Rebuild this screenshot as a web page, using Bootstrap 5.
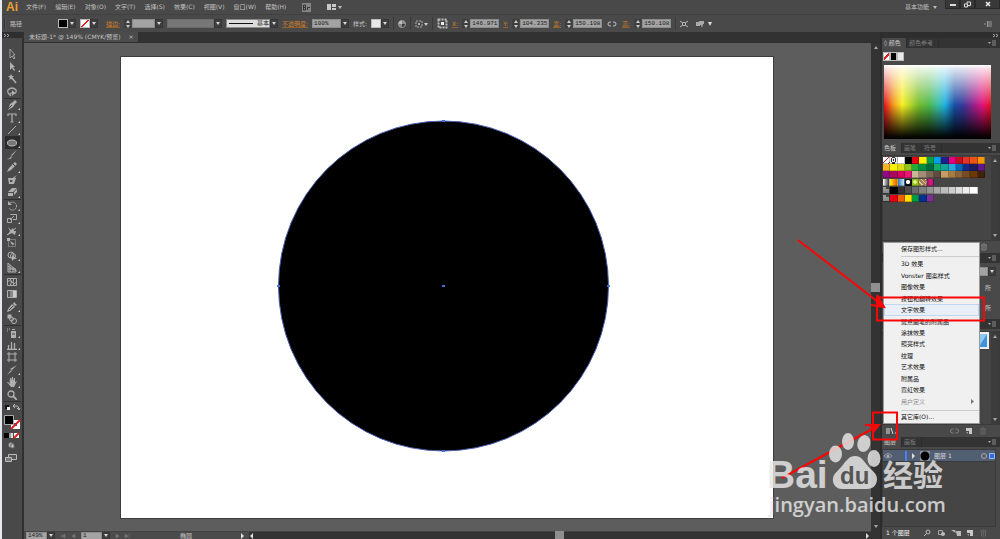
<!DOCTYPE html>
<html lang="zh-CN">
<head>
<meta charset="utf-8">
<meta name="viewport" content="width=device-width, initial-scale=1">
<title>未标题-1</title>
<link href="https://cdn.jsdelivr.net/npm/bootstrap@5.3.0/dist/css/bootstrap.min.css" rel="stylesheet">
<style>
:root{--bar:#494949;--dark:#323232;--line:#393939;--ink:#c4c4c4;--orange:#d2802c}
body{font:6px/8px "DejaVu Sans","Noto Sans CJK SC",sans-serif;color:var(--ink);background:var(--bar);border-left:2px solid #e4e9f2}
button,input,select{font:inherit;color:inherit;border:0;border-radius:0;padding:0;background:none;min-width:0}
a{color:inherit;text-decoration:none}
svg{display:block;flex:none}
.menubar{height:15px;border-bottom:1px solid #414141}
.logo{font:bold 12px/14px "Liberation Sans",sans-serif;color:#eda12f;padding:0 8px 0 4px}
.menubar nav{gap:9px}
.winbtns button{height:9px;width:15px;background:#383838;border:1px solid #2a2a2a;border-top:0;color:#ddd}
.winbtns button:last-child{width:25px}
.control{height:17px;padding-left:2px}
.ctl{margin-left:4px}
.ctl-wide{margin-left:8px}
.ctl-far{margin-left:36px}
.grip{width:2px;height:11px;background:#333;border-right:1px solid #555}
.chip{width:10px;height:9px;border:1px solid #bbb}
.chip-sm{width:7px}
.chip-white{background:#e9e9e9}.chip-black{background:#000}
.chip-none{background:linear-gradient(135deg,#fff 41%,#e02020 41%,#e02020 59%,#fff 59%)}
.drop{width:8px;height:9px;background:#3e3e3e;border:1px solid #353535;display:flex;align-items:center;justify-content:center}
.drop::after{content:"";border:2px solid transparent;border-top:3px solid #d5d5d5;border-bottom:0}
.field{background:#a3a3a3;color:#1b1b1b;height:9px;border:1px solid #8b8b8b;font:6px/7px "Liberation Mono","Noto Sans CJK SC",monospace;padding-left:1px;appearance:none}
.w-num{width:29px}.w-weight{width:23px}.w-brush{width:47px}.w-small{width:21px}.w-profile{width:44px;background:#dcdcdc}
.field:disabled{background:#777;border-color:#6c6c6c;opacity:1}
.lab{color:var(--orange);border-bottom:1px solid #96602c;line-height:7px}
.spin{width:7px;display:flex;flex-direction:column;align-items:center;gap:2px;margin-right:1px;height:9px;background:#3f3f3f;justify-content:center}
.spin::before,.spin::after{content:"";border:2px solid transparent}
.spin::before{border-bottom:3px solid #ccc;border-top:0}.spin::after{border-top:3px solid #ccc;border-bottom:0}
.rule{width:1px;height:13px;background:#3b3b3b}
.minh-0{min-height:0}.minw-0{min-width:0}
.tools{width:22px;background:var(--bar);border-right:2px solid #303030}
.dockcap{height:6px;background:#2e2e2e;color:#aaa}
.toollist{height:354px;margin-top:10px}
.toollist button{flex:1 1 0;width:15px;display:flex;align-items:center;justify-content:center;position:relative;color:#b0b0b0}
.toollist button.flyout::after{content:"";position:absolute;right:0;bottom:1px;border:1px solid transparent;border-right-color:#ccc;border-bottom-color:#ccc}
.toollist button.active{background:#2c2c2c}
.toollist hr{margin:0;width:17px;border-color:#303030;opacity:1;flex:none}
.tabstrip{height:11px;background:#323232;border-bottom:1px solid #2f2f2f}
.doctab{background:#4b4b4b;padding:0 4px 0 5px;gap:8px;line-height:10px;height:10px}
.canvas{background:#5d5d5d;padding:14px 98px 13px 97px}
.artboard{background:#fff;box-shadow:0 0 0 1px #3d3d3d}
.vscroll{width:9px;background:#333;padding:3px 0}
.thumb{width:9px;height:9px;background:#8f8f8f}
.status{height:8px;background:#4b4b4b;border-top:1px solid #444;padding-left:2px}
.status .field,.status .drop{height:8px}
.hscroll{background:#333}
.dock{width:120px;background:var(--bar);border-left:2px solid #2c2c2c}
.ptabs{height:10px;background:#333;line-height:10px}
.ptabs button{padding:0 5px 0 2px;color:#7e7e7e;border-right:1px solid #2c2c2c}
.ptabs button.active{background:var(--bar);color:#ccc}
.p-color{height:105px}.p-swatch{height:110px}.p-look{height:66px}.p-style{height:118px}
.inset{background:#454545;border:1px solid #3a3a3a;margin-top:2px}
.chiprow{margin:4px 0 0 1px}
.spectrum{height:74px;margin:4px 9px 0 2px;background:linear-gradient(#fff 0,rgba(255,255,255,.85) 5%,rgba(255,255,255,.05) 52%,rgba(0,0,0,0) 54%,rgba(0,0,0,.93) 95%,#000),linear-gradient(90deg,#e60f1d 0,#f39a1c 9%,#f8ee22 17%,#78bd2b 32%,#4fb84a 42%,#39bda0 50%,#1eb0e0 57%,#174da2 66%,#38389a 74%,#97208b 84%,#e3137c 92%,#e60f1d)}
.swrow{display:grid;grid-template-columns:repeat(14,1fr);width:102px;height:7px}
.swrow i{border:1px solid rgba(0,0,0,.25);border-width:0 1px 1px 0}
.swrow.grouped{margin-top:1px}
#swatches{padding-top:1px}
.pscroll{width:8px;background:#3c3c3c;padding:3px 0}
.up,.down{border:2px solid transparent;align-self:center}
.up{border-bottom:3px solid #a8a8a8;border-top:0}.down{border-top:3px solid #a8a8a8;border-bottom:0}
.pfoot{height:12px;color:#858585;padding-right:12px}
.lookrow{margin-top:8px;padding-right:9px}
.layer{height:12px;background:#525e72;color:#ddd;border-bottom:1px solid #3a3a3a}
.layer .tagline{width:2px;height:10px;background:#4a80ff}
.popup{position:absolute;left:1px;top:210px;width:97px;height:182px;background:#f0f0f0;border:1px solid #979797;z-index:2;color:#111}
.popup a{flex:1 1 0;padding-left:17px;display:flex;align-items:center;line-height:8px}
.popup a.hot{background:#e9eff7;box-shadow:inset 0 0 0 1px #c3d8f0}
.popup a.off{color:#888}
.popup hr{margin:2px 0 1px 17px;border-color:#ccc;opacity:1;flex:none}
.notes{position:absolute;right:0;top:0;z-index:3;pointer-events:none}
</style>
</head>
<body class="vh-100 overflow-hidden d-flex flex-column">
<svg class="d-none">
  <symbol id="pm" viewBox="0 0 8 6"><path d="M0 2h3L1.500 4z" fill="#aaa"/><path d="M4 1h4M4 3h4M4 5h4" stroke="#888"/></symbol>
  <symbol id="trash" viewBox="0 0 8 8"><path d="M1 2h6M3 1h2M2 2v5h4V2M4 3v3" fill="none" stroke="currentColor"/></symbol>
  <symbol id="newpage" viewBox="0 0 8 8"><path d="M1 1h6v6H4V4H1z" fill="#c8c8c8"/><path d="M1 5h2v2z" fill="#999"/></symbol>
  <symbol id="link" viewBox="0 0 10 8"><path d="M4 2H3a2 2 0 000 4h1M6 2h1a2 2 0 010 4H6" fill="none" stroke="currentColor"/></symbol>
</svg>

<header class="menubar d-flex align-items-center flex-shrink-0">
  <span class="logo">Ai</span>
  <nav class="d-flex" aria-label="主菜单">
    <a href="#">文件(F)</a><a href="#">编辑(E)</a><a href="#">对象(O)</a><a href="#">文字(T)</a><a href="#">选择(S)</a><a href="#">效果(C)</a><a href="#">视图(V)</a><a href="#">窗口(W)</a><a href="#">帮助(H)</a>
  </nav>
  <button class="ms-3" aria-label="Bridge"><svg width="9" height="9" viewBox="0 0 9 9"><path d="M0 0h9v9H0z" fill="#858585"/><path d="M1.500 2v5h2V4.500h-2M1.500 2h2v2.500M5.500 7V4.500H8" fill="none" stroke="#333"/></svg></button>
  <button class="ms-2 ps-2" aria-label="排列文档"><svg width="15" height="8" viewBox="0 0 15 8"><path d="M0 1h4v6H0zM5 1h4v3H5zM5 5h4v2H5z" fill="#c8c8c8"/><path d="M11 3h4l-2 3z" fill="#bbb"/></svg></button>
  <button class="ms-auto me-2 d-flex align-items-center gap-1">基本功能<svg width="4" height="4"><path d="M0 1h4L2 4z" fill="#bbb"/></svg></button>
  <div class="winbtns d-flex align-self-start">
    <button aria-label="最小化"><svg class="mx-auto" width="6" height="6"><path d="M0 4h6" stroke="#ddd" stroke-width="2"/></svg></button>
    <button aria-label="还原"><svg class="mx-auto" width="7" height="7"><path d="M.5 3h3v3h-3zM3 3V1h3.500v3.500H4" fill="none" stroke="#ddd"/></svg></button>
    <button aria-label="关闭"><svg class="mx-auto" width="6" height="6"><path d="M1 1l4 4M5 1L1 5" stroke="#eee" stroke-width="1.500"/></svg></button>
  </div>
</header>

<div class="control d-flex align-items-center flex-shrink-0">
  <span class="grip"></span><span class="ctl">路径</span>
  <button class="d-flex align-items-center ctl-far" aria-label="填色"><span class="chip chip-black"></span><span class="drop"></span></button>
  <button class="d-flex align-items-center ctl" aria-label="描边颜色"><span class="chip chip-none"></span><span class="drop"></span></button>
  <label class="lab ctl-wide" for="sw">描边:</label>
  <span class="spin ctl"></span><input id="sw" class="field w-weight"><button class="drop" aria-label="粗细"></button>
  <input class="field w-brush ctl" disabled aria-label="画笔"><span class="drop"></span>
  <button class="field w-profile ctl d-flex align-items-center justify-content-between" aria-label="基本"><svg width="26" height="3"><path d="M1 1.500h24" stroke="#111"/></svg><span>基本</span></button><button class="drop" aria-label="描边样式"></button>
  <label class="lab ctl" for="op">不透明度:</label>
  <input id="op" class="field w-num ctl" value="100%"><button class="drop" aria-label="不透明度列表"></button>
  <span class="ctl">样式:</span>
  <button class="d-flex align-items-center ctl" aria-label="样式"><span class="chip chip-white"></span><span class="drop"></span></button>
  <span class="rule ctl"></span>
  <button class="ctl" aria-label="重新着色"><svg width="8" height="8"><circle cx="4" cy="4" r="3.500" fill="#888"/><path d="M4 .5A3.500 3.500 0 00.5 4L4 4z" fill="#bbb"/><path d="M7.500 4A3.500 3.500 0 014 7.500L4 4z" fill="#3a3a3a"/><circle cx="4" cy="4" r="3.500" fill="none" stroke="#aaa" stroke-width=".8"/></svg></button>
  <span class="rule ctl"></span>
  <button class="ctl" aria-label="选择类似"><svg width="13" height="8"><path d="M1 1h6v6H1z" fill="none" stroke="#aaa" stroke-dasharray="2 1"/><path d="M3 3h2v2H3z" fill="#aaa"/><path d="M9 3h4l-2 3z" fill="#ccc"/></svg></button>
  <span class="rule ctl"></span>
  <button class="ctl" aria-label="参考点"><svg width="11" height="11"><path d="M1.500 1.500h8v8h-8z" fill="none" stroke="#bbb" stroke-width="2" stroke-dasharray="2 1"/><path d="M4 4h3v3H4z" fill="#eee"/></svg></button>
  <label class="lab ctl" for="px">X:</label><span class="spin ctl"></span><input id="px" class="field w-num" value="146.971 mm">
  <label class="lab ctl" for="py">Y:</label><span class="spin ctl"></span><input id="py" class="field w-num" value="104.335 mm">
  <label class="lab ctl" for="pw">宽:</label><span class="spin ctl"></span><input id="pw" class="field w-num" value="150.108 mm">
  <button class="ctl" aria-label="约束比例"><svg width="12" height="8"><use href="#link"/></svg></button>
  <label class="lab ctl" for="ph">高:</label><span class="spin ctl"></span><input id="ph" class="field w-num" value="150.108 mm">
  <span class="rule ctl"></span>
  <button class="ctl" aria-label="隔离"><svg width="8" height="8"><path d="M0 1l2 1.500M8 1L6 2.500M0 7l2-1.500M8 7L6 5.500M2.500 2.500h3v3h-3z" fill="none" stroke="#bbb"/></svg></button>
  <button class="ctl-wide" aria-label="编辑"><svg width="16" height="8"><path d="M0 2h4v4H0zM3 1h5v3H7L6 8 5 5H3z" fill="#aaa"/><path d="M12 2h4l-2 4z" fill="#ddd"/></svg></button>
  <button class="ms-auto me-2" aria-label="控制菜单"><svg width="8" height="6"><path d="M0 3h2M4 1h4M4 3h4M4 5h4M3.500 0v6" stroke="#999" fill="none"/></svg></button>
</div>

<main class="d-flex flex-grow-1 minh-0">
  <aside class="tools d-flex flex-column align-items-center flex-shrink-0">
    <div class="dockcap w-100"><svg width="8" height="6"><path d="M2 2l2 1.500-2 1.500M5 2l2 1.500-2 1.500" fill="none" stroke="#aaa"/></svg></div>
    <div id="tools" class="toollist d-flex flex-column align-items-center flex-shrink-0"></div>
    <svg width="18" height="62" viewBox="0 0 18 62">
      <path d="M2 3h4v4H2z" fill="#111"/><path d="M4 5h3v3H4z" fill="#eee"/><path d="M11 4h3q2 0 2 4M12 2l-2 2 2 2M14 6l2 2 1-2" fill="none" stroke="#bbb"/>
      <path d="M8 18h9v9H8z" fill="#fff"/><path d="M11 21h3v3h-3z" fill="#555"/><path d="M8 27l9-9" stroke="#e02020" stroke-width="2"/><path d="M1.500 13.500h9v9h-9z" fill="#000" stroke="#aaa"/>
      <path d="M1 31h5v5H1z" fill="#000"/><path d="M6 31h2v5H6z" fill="#999"/><path d="M8 31h2v5H8z" fill="#ddd"/><path d="M11 31h5v5h-5z" fill="#fff"/><path d="M11 36l5-5" stroke="#e02020" stroke-width="2"/>
      <circle cx="8" cy="43" r="2.500" fill="#aaa"/><path d="M8 42h3v4H8z" fill="#ccc" stroke="#666"/>
      <path d="M5.500 52.500h8v5h-8z" fill="#555" stroke="#bbb"/><path d="M2.500 55.500h6v4h-6z" fill="#777" stroke="#bbb"/>
    </svg>
  </aside>

  <section class="d-flex flex-column flex-grow-1 minw-0">
    <div class="tabstrip d-flex flex-shrink-0">
      <div class="doctab d-flex"><span>未标题-1* @ 149% (CMYK/预览)</span><button aria-label="关闭文档">×</button></div>
    </div>
    <div class="d-flex flex-grow-1 minh-0">
      <div class="d-flex flex-column flex-grow-1">
        <div class="canvas flex-grow-1 d-flex">
          <div class="artboard flex-grow-1">
            <svg width="100%" height="100%" viewBox="0 0 652 461">
              <circle cx="322.500" cy="229" r="165" fill="#000" stroke="#4a5fb0"/>
              <path d="M321 63h3v2h-3zM321 393h3v2h-3zM156 228h3v2h-3zM486 228h3v2h-3zM321 228h3v2h-3z" fill="#4070d8"/>
            </svg>
          </div>
        </div>
        <div class="status d-flex align-items-center flex-shrink-0">
          <input class="field w-small" value="149%" aria-label="缩放"><button class="drop" aria-label="缩放列表"></button>
          <svg class="ctl" width="18" height="6"><path d="M2 1v4M6 1v4L3 3zM16 1v4l-3-2z" fill="#777" stroke="#777" stroke-width=".5"/></svg>
          <input class="field w-small ctl" value="1" aria-label="画板"><button class="drop" aria-label="画板列表"></button>
          <svg class="ctl" width="18" height="6"><path d="M2 1v4l3-2zM11 1v4l3-2zM15 1v4" fill="#777" stroke="#777" stroke-width=".5"/></svg>
          <span class="ms-5">椭圆</span>
          <svg class="ms-5" width="5" height="6"><path d="M1 0v6l3-3z" fill="#ddd"/></svg>
          <div class="hscroll flex-grow-1 h-100 d-flex justify-content-between align-items-center ctl">
            <svg width="5" height="6"><path d="M4 0v6L1 3z" fill="#ddd"/></svg><span class="thumb"></span><svg width="6" height="6"><path d="M1 0v6l3-3z" fill="#ddd"/></svg>
          </div>
        </div>
      </div>
      <div class="vscroll d-flex flex-column justify-content-between flex-shrink-0"><span class="up"></span><span class="thumb"></span><span class="down mb-2"></span></div>
    </div>
  </section>

  <aside class="dock position-relative flex-shrink-0 d-flex flex-column">
    <div class="dockcap d-flex justify-content-end flex-shrink-0"><svg width="8" height="6"><path d="M1 2l2 1.500-2 1.500M4 2l2 1.500-2 1.500" fill="none" stroke="#aaa"/></svg></div>
    <section class="p-color flex-shrink-0">
      <div class="ptabs d-flex"><button class="active">◊ 颜色</button><button>颜色参考</button><svg class="ms-auto align-self-center me-1" width="8" height="6"><use href="#pm"/></svg></div>
      <div class="d-flex chiprow"><span class="chip chip-none chip-sm"></span><span class="chip chip-black chip-sm"></span><span class="chip chip-white chip-sm"></span></div>
      <div class="spectrum"></div>
    </section>
    <section class="p-swatch flex-shrink-0 d-flex flex-column">
      <div class="ptabs d-flex flex-shrink-0"><button class="active">色板</button><button>画笔</button><button>符号</button><svg class="ms-auto align-self-center me-1" width="8" height="6"><use href="#pm"/></svg></div>
      <div class="inset d-flex flex-grow-1"><div id="swatches" class="flex-grow-1"></div><div class="pscroll d-flex flex-column justify-content-between"><span class="up"></span><span class="down"></span></div></div>
      <div class="pfoot d-flex align-items-center justify-content-end"><svg width="8" height="8"><use href="#trash"/></svg></div>
    </section>
    <section class="p-look flex-shrink-0">
      <div class="ptabs d-flex"><svg class="ms-auto align-self-center me-1" width="8" height="6"><use href="#pm"/></svg></div>
      <div class="d-flex mt-1 justify-content-end pe-1"><input class="field w-brush" aria-label="外观"><button class="drop" aria-label="外观列表"></button></div>
      <div class="lookrow text-end"><button>所</button></div>
      <div class="lookrow text-end pt-1"><button>所</button></div>
    </section>
    <section class="p-style flex-shrink-0 d-flex flex-column">
      <div class="ptabs d-flex flex-shrink-0"><svg class="ms-auto align-self-center me-1" width="8" height="6"><use href="#pm"/></svg></div>
      <div class="inset d-flex flex-grow-1 justify-content-end">
        <svg width="16" height="18"><path d="M0 0h14v17H0z" fill="#eee"/><path d="M1 2h11v13H1z" fill="#3d93d8"/><path d="M1 2h11L4 15H1z" fill="#8cc8f0"/></svg>
        <div class="pscroll d-flex flex-column justify-content-between"><span class="up"></span><span class="down"></span></div></div>
      <div class="pfoot d-flex align-items-center flex-shrink-0 gap-1 ps-1">
        <button aria-label="图形样式库菜单"><svg width="12" height="8"><path d="M1 1v6M3 1v6M5 1l2 6M9 6h1M11 6h1" stroke="#ddd"/></svg></button>
        <svg class="ms-auto" width="11" height="8"><use href="#link"/></svg><svg width="10" height="8"><use href="#newpage"/></svg><svg width="10" height="8" opacity=".5"><use href="#trash"/></svg>
      </div>
    </section>
    <section class="flex-grow-1 d-flex flex-column">
      <div class="ptabs d-flex flex-shrink-0"><button class="active">图层</button><button>画板</button><svg class="ms-auto align-self-center me-1" width="8" height="6"><use href="#pm"/></svg></div>
      <div class="inset flex-grow-1 me-1">
        <div class="layer d-flex align-items-center gap-1">
          <svg width="10" height="8"><path d="M1 4q4-5 8 0-4 4-8 0z" fill="none" stroke="#999"/><circle cx="5" cy="4" r="1.500" fill="#aaa"/></svg>
          <span class="tagline ms-2"></span>
          <svg width="5" height="6"><path d="M1 0v6l3-3z" fill="#ddd"/></svg>
          <svg width="10" height="10"><path d="M0 0h10v10H0z" fill="#8a8f98"/><circle cx="5" cy="5" r="4.500" fill="#000"/></svg>
          <span>图层 1</span>
          <svg class="ms-auto" width="14" height="8"><circle cx="3" cy="4" r="2.500" fill="none" stroke="#aaa"/><path d="M8.500 1.500h5v5h-5z" fill="#2e6cf0" stroke="#9bb8f0"/></svg>
        </div>
      </div>
      <div class="pfoot d-flex align-items-center flex-shrink-0 ps-1 gap-1"><span class="text-light">1 个图层</span>
        <svg class="ms-auto" width="10" height="8"><circle cx="5" cy="3" r="2" fill="none" stroke="#bbb"/><path d="M3.500 4.500L1 7" stroke="#bbb"/></svg>
        <svg width="10" height="8"><path d="M1.500 1.500h4v4h-4z" fill="none" stroke="#aaa"/><circle cx="6" cy="5" r="2" fill="#bbb"/></svg>
        <svg width="10" height="8"><path d="M0 1h4l1 3M5 2h5v5H6z" fill="#bbb"/></svg>
        <svg width="10" height="8"><use href="#newpage"/></svg>
        <svg width="9" height="8" opacity=".5"><use href="#trash"/></svg>
      </div>
    </section>

    <nav class="popup d-flex flex-column" aria-label="图形样式库">
      <a href="#">保存图形样式...</a><hr>
      <a href="#">3D 效果</a><a href="#">Vonster 图案样式</a><a href="#">图像效果</a><a href="#">按钮和翻转效果</a><a href="#" class="hot">文字效果</a><a href="#">斑点画笔的附属品</a><a href="#">涂抹效果</a><a href="#">照亮样式</a><a href="#">纹理</a><a href="#">艺术效果</a><a href="#">附属品</a><a href="#">霓虹效果</a>
      <a href="#" class="off">用户定义<svg class="ms-auto me-1" width="4" height="5"><path d="M0 0v5l3-2.500z" fill="#777"/></svg></a><hr>
      <a href="#">其它库(O)...</a>
    </nav>

    <svg class="notes" width="240" height="507" viewBox="760 32 240 507">
      <g fill="none" stroke="#fb0606">
        <path d="M877 297.500h107v23H877z" stroke-width="2"/>
        <path d="M873 412.500h24v27h-24z" stroke-width="2"/>
        <path d="M798 240L882 305M877 295l7 12-13-2M782 478l94-51M865 425h14l-6 7" stroke-width="2"/>
      </g>
      <path d="M885 308l-10-2 4-8zM879 425l-10 1 5 5z" fill="#fb0606"/>
      <g fill="#e8e8e8" opacity=".82">
        <text x="767" y="488" font-family="Liberation Sans" font-weight="bold" font-size="39">Bai</text>
        <ellipse cx="835.500" cy="454" rx="6.500" ry="8.500"/><ellipse cx="848" cy="441.500" rx="6" ry="8.500"/><ellipse cx="864" cy="443.500" rx="6.500" ry="8.500" transform="rotate(12 864 443)"/><ellipse cx="874" cy="458.500" rx="6.500" ry="8.500"/>
        <path d="M855 456c6 0 9 5 12 9 4 5 10 8 10 14 0 7-5 10-10 10H842c-6 0-10-5-9-11 1-5 6-8 9-12 4-5 7-10 13-10z"/>
        <text x="883" y="486" font-family="Noto Sans CJK SC" font-weight="bold" font-size="30">经验</text>
        <text x="769" y="512" font-family="Open Sans" font-weight="600" font-size="20">jingyan.baidu.com</text>
      </g>
      <text x="840" y="484" font-family="Liberation Sans" font-weight="bold" font-size="24" fill="#555">du</text>
    </svg>
  </aside>
</main>

<script src="https://cdn.jsdelivr.net/npm/bootstrap@5.3.0/dist/js/bootstrap.bundle.min.js"></script>
<script>
// Tool palette: [label, svg body, has flyout]; null draws a divider.
const S='fill="none" stroke="currentColor"', F='fill="currentColor"';
const tools=[
 ['选择',`<path d="M3 0v9l2-2 2 3 1-1-2-3h2z" ${S} stroke-width=".8"/>`],
 ['直接选择',`<path d="M3 0v8l2-2 2 3 1-1-2-3h2z" ${F}/>`,1],
 ['魔棒',`<path d="M5 4l4 5" ${S} stroke-width="1.500"/><path d="M4 0l1 2 2 0-2 2 1 2-2-1-2 1 1-2-2-2h2z" ${F}/>`],
 ['套索',`<path d="M3 8Q0 6 1 3q4-4 8 0 1 3-2 3H4Q2 7 4 9" ${S} stroke-width="1.200"/><path d="M5 3v6l2-2h2z" ${F}/>`],
 null,
 ['钢笔',`<path d="M8 0l2 2-2 2-2 3-5 3 2-6 3-2z" ${F}/><path d="M1 9l4-4" stroke="#444"/>`,1],
 ['文字',`<path d="M1 3V1h8v2M5 1v8M3.500 9h3" ${S} stroke-width="1.200"/>`,1],
 ['直线段',`<path d="M1 9l8-8" ${S}/>`,1],
 ['椭圆',`<ellipse cx="5" cy="5" rx="4.500" ry="3" fill="#777" stroke="#bbb"/>`,1],
 ['画笔',`<path d="M10 0L5 6 4 5zM4 6l1 1Q4 10 0 9q3 0 4-3z" ${F}/>`],
 ['铅笔',`<path d="M8 0l2 2-6 6-4 2 2-4z" ${F}/><path d="M6 2l2 2" stroke="#444"/>`,1],
 ['斑点画笔',`<path d="M1 3h8L7 9H2z" ${F}/><path d="M3 5h3L5 7H3z" fill="#444"/><path d="M10 0L5 6 4 4z" ${F}/>`],
 ['橡皮擦',`<path d="M5 1h5L6 5H1zM1 6h5v3H1zM7 5l3-3v3L7 8z" ${F}/>`,1],
 null,
 ['旋转',`<path d="M3 2a4 4 0 11-1 5" ${S} stroke-dasharray="2 .6"/><path d="M1 0v4h4z" ${F}/>`,1],
 ['比例缩放',`<path d="M.5 5.500h4v4h-4zM3.500 1.500h6v5H6M3 7l4-4" ${S}/>`,1],
 ['宽度',`<path d="M1 1l3 3 2-2 1 3 2 0-1 4-3-2-4 2 2-4z" ${F}/><path d="M0 9L9 2" ${S}/>`,1],
 ['自由变换',`<path d="M1.500 1.500h7v7h-7z" ${S} stroke-dasharray="1 1"/><path d="M3 3l5 3-3 1z" ${F}/><path d="M0 0h3v3H0z" ${F}/>`],
 ['形状生成器',`<circle cx="4" cy="4" r="3" ${S}/><circle cx="6" cy="5" r="2.500" ${S}/><path d="M5 4v6l2-2h3z" ${F}/>`,1],
 ['透视网格',`<path d="M1 0v9h8V7L1 0M3 2v7M6 4v5M1 3l8 5M1 6h8" ${S}/>`,1],
 null,
 ['网格',`<path d="M.5 1.500h9v7h-9zM0 5q3-3 5 0t5 0M3 1q3 4 0 8M7 1q-2 4 0 8" ${S}/>`],
 ['渐变',`<path d="M0 1h3v8H0z" fill="#555"/><path d="M3 1h3v8H3z" fill="#888"/><path d="M6 1h3v8H6z" fill="#ccc"/><path d="M.5 1.500h9v7h-9z" ${S}/>`],
 ['吸管',`<path d="M7 0l3 3-2 1L6 2zM5 2l3 3-5 4-3 1 1-3z" ${F}/><path d="M2 8l4-4" stroke="#444"/>`,1],
 ['混合',`<path d="M.5 .5h4v4h-4z" ${F}/><circle cx="4.500" cy="5" r="2" ${S}/><circle cx="7" cy="7" r="2.500" ${S}/>`],
 null,
 ['符号喷枪',`<path d="M4 3h5v7H4zM5 1h3v1H5z" ${F}/><path d="M0 1h3M0 3h2" ${S} stroke-dasharray="1 1"/><path d="M5 6h3" stroke="#444"/>`,1],
 ['柱形图',`<path d="M0 9.500h10M1.500 9V5M4.500 9V2M7.500 9V3" ${S} stroke-width="1.300"/>`,1],
 ['画板',`<path d="M2 0v10M8 0v10M0 2h10M0 8h10" ${S}/>`],
 ['切片',`<path d="M10 0L5 5 3 4zM4 5l1 1-5 4z" ${F}/>`,1],
 ['抓手',`<path d="M2 2l1 3V1h1v3l1-4h1v4l1-3h1v4l2-1-3 6H4L0 5h1l2 2z" ${F}/>`,1],
 ['缩放',`<circle cx="4" cy="4" r="3" ${S} stroke-width="1.300"/><path d="M6 6l4 4" ${S} stroke-width="1.800"/>`],
 null];
document.getElementById('tools').innerHTML=tools.map(t=>t?`<button aria-label="${t[0]}" class="${t[2]?'flyout':''} ${t[0]=='椭圆'?'active':''}"><svg width="10" height="10">${t[1]}</svg></button>`:'<hr>').join('');

const none='linear-gradient(to bottom right,#fff 42%,#e02020 42%,#e02020 58%,#fff 58%)';
const folder='linear-gradient(90deg,#999 50%,transparent 50%) 0 0/100% 2px no-repeat,linear-gradient(#999,#888) 0 2px/6px 4px no-repeat';
const rows=[
 [none,'repeating-radial-gradient(circle,#333 0 1px,#eee 1px 2px)','#fff','#000','#e60012','#fff100','#00a04a','#00a0e9','#1d2088','#e4007f','#c30d23','#e5352b','#ea5514','#f39800'],
 ['#f5b323','#fff100','#dcdc14','#8fc31f','#22ac38','#009140','#00693e','#13ae67','#12a59a','#2ca6e0','#0068b7','#172a88','#1b1c5f','#601986'],
 ['#920783','#a9085d','#d7005f','#e61774','#c7b896','#a48b78','#7d6857','#604c3f','#c69c63','#a67c42','#8c6239','#754c24','#6a3906','#42210b'],
 ['linear-gradient(90deg,#fff,#333)','linear-gradient(90deg,#fff100,#ea5514)','linear-gradient(90deg,#2a7cc0,#cfe6f6)','radial-gradient(#fff 40%,#111 60%)','radial-gradient(#f5f0a0 30%,#8fc31f 50%)','repeating-linear-gradient(45deg,#a67c52 0 2px,#dcc8a0 2px 3px)','linear-gradient(90deg,#7b1070,#e61774,#a02080)'],
 [folder,'#000','#333','#4d4d4d','#6a6a6a','#808080','#949494','#a8a8a8','#bcbcbc','#cdcdcd','#dedede','#eee','#fff'],
 [folder,'#e60012','#eb6100','#ffe100','#009b3f','#00308f','#7b3090']];
document.getElementById('swatches').innerHTML=rows.map((r,i)=>`<div class="swrow ${i>2?'grouped':''}">${r.map(c=>`<i style="background:${c}"></i>`).join('')}</div>`).join('');
</script>
</body>
</html>
